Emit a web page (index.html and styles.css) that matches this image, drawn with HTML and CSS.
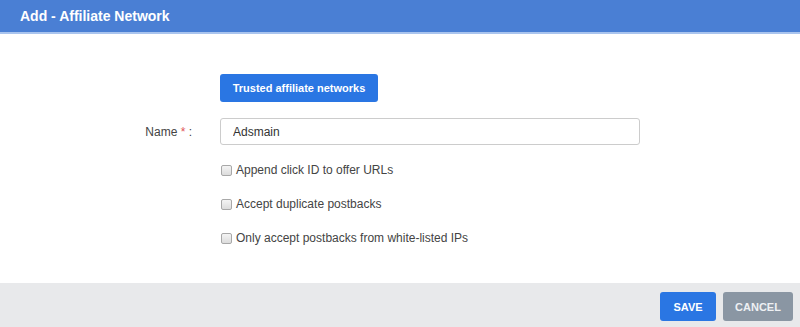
FILE: index.html
```html
<!DOCTYPE html>
<html>
<head>
<meta charset="utf-8">
<link rel="stylesheet" href="styles.css">
</head>
<body>
<div class="modal">
  <div class="header">Add - Affiliate Network</div>
  <div class="body">
    <div class="row">
      <div class="label"></div>
      <button class="btn-trusted">Trusted affiliate networks</button>
    </div>
    <div class="row row-name">
      <div class="label">Name <span class="req">*</span> :</div>
      <input class="input" type="text" value="Adsmain">
    </div>
    <div class="checks">
      <label class="check"><span class="box"></span>Append click ID to offer URLs</label>
      <label class="check"><span class="box"></span>Accept duplicate postbacks</label>
      <label class="check"><span class="box"></span>Only accept postbacks from white-listed IPs</label>
    </div>
  </div>
  <div class="footer">
    <button class="btn btn-save">SAVE</button>
    <button class="btn btn-cancel">CANCEL</button>
  </div>
</div>
</body>
</html>
```
FILE: styles.css
```css
* { box-sizing: border-box; }
html, body { margin: 0; padding: 0; }
body {
  width: 800px;
  height: 327px;
  overflow: hidden;
  background: #fff;
  font-family: Arial, "Liberation Sans", sans-serif;
}
.modal { display: flex; flex-direction: column; height: 327px; }
.header {
  height: 34px;
  background: #4a7fd4;
  border-bottom: 2px solid #a9c4ee;
  color: #fff;
  font-weight: bold;
  font-size: 14px;
  padding: 8px 0 0 20px;
}
.body { flex: 1; padding-top: 40px; }
.row { display: flex; align-items: center; }
.label {
  width: 192px;
  text-align: right;
  padding-right: 0;
  margin-right: 28px;
  font-size: 12px;
  color: #444;
}
.req { color: #e0555a; }
.btn-trusted {
  height: 28px;
  width: 158px;
  border: none;
  border-radius: 3px;
  background: #2a76e3;
  color: #fff;
  font-family: inherit;
  font-weight: bold;
  font-size: 11px;
  padding: 0;
}
.row-name { margin-top: 16px; }
.input {
  width: 420px;
  height: 27px;
  border: 1px solid #ccc;
  border-radius: 3px;
  padding: 0 0 0 12px;
  font-family: inherit;
  font-size: 12px;
  color: #333;
}
.checks {
  display: flex;
  flex-direction: column;
  gap: 20px;
  padding-left: 221px;
  margin-top: 18px;
}
.check {
  display: flex;
  align-items: center;
  font-size: 12px;
  color: #444;
  height: 14px;
}
.box {
  width: 11px;
  height: 11px;
  border: 1px solid #a8a8a8;
  border-radius: 2px;
  background: linear-gradient(#f4f4f4, #dcdcdc);
  margin-right: 4px;
}
.footer {
  height: 44px;
  background: #e8e9eb;
  display: flex;
  justify-content: flex-end;
  align-items: flex-start;
  padding: 9px 7px 0 0;
  gap: 7px;
}
.btn {
  height: 29px;
  border: none;
  border-radius: 3px;
  color: #fff;
  font-family: inherit;
  font-weight: bold;
  font-size: 11px;
  padding: 0;
}
.btn-save { width: 56px; background: #2a76e3; }
.btn-cancel { width: 70px; background: #8a96a3; color: #eef0f3; }
```
